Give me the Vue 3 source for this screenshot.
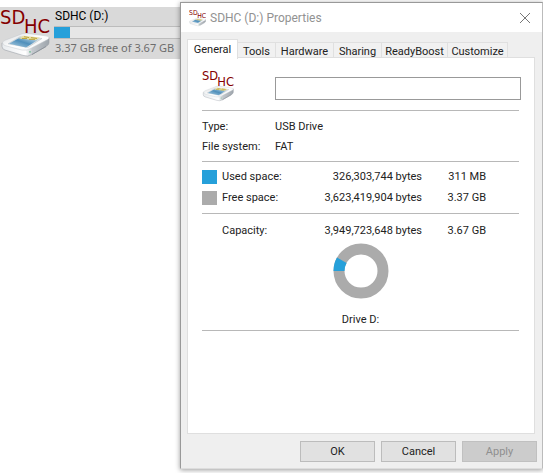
<script setup>
import { ref } from 'vue'

const tabs = ['General', 'Tools', 'Hardware', 'Sharing', 'ReadyBoost', 'Customize']
const active = ref('General')
const label = ref('')
const usage = [
  { name: 'Used space:', bytes: '326,303,744 bytes', size: '311 MB', kind: 'used' },
  { name: 'Free space:', bytes: '3,623,419,904 bytes', size: '3.37 GB', kind: 'free' },
]
</script>

<template>
  <svg class="defs" width="0" height="0" aria-hidden="true">
    <defs>
      <linearGradient id="case-top" x1="0" y1="0" x2="1" y2="1">
        <stop offset="0" stop-color="#d9dcdf" />
        <stop offset="0.5" stop-color="#ffffff" />
        <stop offset="1" stop-color="#eef1f3" />
      </linearGradient>
      <linearGradient id="case-front" x1="0" y1="0" x2="1" y2="0">
        <stop offset="0" stop-color="#e9ecef" />
        <stop offset="0.5" stop-color="#ffffff" />
        <stop offset="0.65" stop-color="#c3c8cd" />
        <stop offset="1" stop-color="#9ea5ac" />
      </linearGradient>
      <linearGradient id="card" x1="1" y1="0" x2="0" y2="1">
        <stop offset="0" stop-color="#cfe2ee" />
        <stop offset="0.5" stop-color="#4f8fbb" />
        <stop offset="1" stop-color="#b5d3e4" />
      </linearGradient>
      <symbol id="sdhc" viewBox="0 0 50 52">
        <g transform="translate(0 3) scale(1 0.89)">
          <path d="M2 37 L26 44 L49 31 V37 Q49 39 46 41 L32 50 Q28 53 23 51 L5 45 Q2 44 2 41Z" fill="url(#case-front)" stroke="#989ea4" stroke-width="0.6" />
          <path d="M3 38 Q1 36 5 34 L19 28 Q22 26 26 26 L45 29 Q51 30 48 33 L31 43 Q27 46 22 45 L5 40 Q3 39 3 38Z" fill="url(#case-top)" stroke="#c3c8cc" stroke-width="0.5" />
          <path d="M20 30 L42 32 L28 42 L8 38Z" fill="#e3e7ea" stroke="#b4babf" stroke-width="0.5" />
          <path d="M20 31 L39 33 L26 42 L9 38Z" fill="url(#card)" />
          <path d="M23 29 L40 31 L36 34 L19 32Z" fill="#e8dfa4" />
          <path d="M24 30 L29 31 M31 31 L37 32 M22 32 L27 32 M29 33 L35 33" stroke="#b9a336" stroke-width="1" />
          <path d="M32 50 L46 41" stroke="#8b9299" stroke-width="1" fill="none" />
          <circle cx="30" cy="47" r="1" fill="#7bbf9a" />
        </g>
        <text x="0" y="17" class="glyph">SD</text>
        <text x="24" y="26" class="glyph">HC</text>
      </symbol>
    </defs>
  </svg>

  <main class="desktop">
    <section class="tile">
      <svg class="tile-icon" aria-hidden="true"><use href="#sdhc" /></svg>
      <div class="tile-info">
        <span class="tile-name">SDHC (D:)</span>
        <div class="bar"><div class="fill"></div></div>
        <span class="tile-free">3.37 GB free of 3.67 GB</span>
      </div>
    </section>

    <section class="dialog" role="dialog" aria-labelledby="dialog-title">
      <header class="titlebar">
        <svg class="title-icon" aria-hidden="true"><use href="#sdhc" /></svg>
        <h1 id="dialog-title">SDHC (D:) Properties</h1>
        <button class="close" aria-label="Close">
          <svg width="12" height="12" viewBox="0 0 12 12"><path d="M1 1 L11 11 M11 1 L1 11" stroke="#777" fill="none" /></svg>
        </button>
      </header>

      <div class="body">
        <nav class="tabs" role="tablist">
          <button v-for="t in tabs" :key="t" role="tab" :aria-selected="active === t" :class="['tab', { active: active === t }]" @click="active = t">{{ t }}</button>
        </nav>

        <div class="panel" role="tabpanel">
          <div class="head">
            <svg class="head-icon" aria-hidden="true"><use href="#sdhc" /></svg>
            <input v-model="label" type="text" class="field" aria-label="Volume label" />
          </div>
          <hr />
          <dl class="facts">
            <dt>Type:</dt><dd>USB Drive</dd>
            <dt>File system:</dt><dd>FAT</dd>
          </dl>
          <hr />
          <table class="usage">
            <tbody>
              <tr v-for="u in usage" :key="u.kind">
                <td class="key"><span :class="['swatch', u.kind]"></span></td>
                <th scope="row">{{ u.name }}</th>
                <td class="bytes">{{ u.bytes }}</td>
                <td class="size">{{ u.size }}</td>
              </tr>
            </tbody>
          </table>
          <hr />
          <table class="usage capacity">
            <tbody>
              <tr>
                <td class="key"></td>
                <th scope="row">Capacity:</th>
                <td class="bytes">3,949,723,648 bytes</td>
                <td class="size">3.67 GB</td>
              </tr>
            </tbody>
          </table>
          <figure class="chart">
            <svg width="56" height="56" viewBox="0 0 56 56" aria-hidden="true">
              <circle cx="28" cy="28" r="22" fill="none" stroke="#ababab" stroke-width="11" />
              <path d="M6 28 A22 22 0 0 1 8.8 17.3" fill="none" stroke="#26a0da" stroke-width="11" />
            </svg>
            <figcaption>Drive D:</figcaption>
          </figure>
          <hr />
        </div>

        <footer class="actions">
          <button class="btn">OK</button>
          <button class="btn">Cancel</button>
          <button class="btn" disabled>Apply</button>
        </footer>
      </div>
    </section>
  </main>
</template>

<style>
body {
  background: #fff;
}
</style>

<style scoped>
* {
  box-sizing: border-box;
}
.defs {
  position: absolute;
}
.glyph {
  font: 20px "DejaVu Sans Condensed", "Roboto", sans-serif;
  fill: #850000;
}
.desktop {
  display: flex;
  align-items: flex-start;
  min-height: 100vh;
  padding: 2px 0 4px;
  font: 11px/20px Roboto, "Noto Sans", sans-serif;
  color: #222;
  overflow: hidden;
}
button,
input {
  font: inherit;
  color: inherit;
}
.tile {
  display: flex;
  gap: 4px;
  width: 180px;
  height: 52px;
  margin-top: 5px;
  background: #d9d9d9;
}
.tile-icon {
  width: 50px;
  height: 52px;
  flex: none;
}
.tile-info {
  flex: 1;
  display: flex;
  flex-direction: column;
}
.tile-name {
  padding-left: 1px;
  font-size: 12px;
  line-height: 19px;
  color: #000;
}
.bar {
  height: 13px;
  border-top: 1px solid #bcbcbc;
  border-bottom: 1px solid #bcbcbc;
  background: #e6e6e6;
}
.fill {
  width: 16px;
  height: 100%;
  background: #26a0da;
}
.tile-free {
  padding-left: 1px;
  font-family: "Noto Sans", sans-serif;
  line-height: 18px;
  color: #6d6d6d;
  white-space: nowrap;
}
.dialog {
  flex: 1;
  align-self: stretch;
  display: flex;
  flex-direction: column;
  border: 1px solid #999;
  border-bottom-color: #ddd;
  border-right-color: #bbb;
  background: #efefef;
  box-shadow: 0 1px 5px rgba(0, 0, 0, 0.4);
}
.titlebar {
  display: flex;
  align-items: center;
  gap: 4px;
  height: 29px;
  padding: 0 9px 0 8px;
  background: #fff;
}
.title-icon {
  width: 17px;
  height: 18px;
}
h1 {
  flex: 1;
  margin: 0;
  font-size: 12px;
  font-weight: 400;
  color: #929292;
}
.close {
  display: flex;
  padding: 2px;
  border: 0;
  background: none;
}
.body {
  flex: 1;
  display: flex;
  flex-direction: column;
  padding: 7px 5px 6px 6px;
}
.tabs {
  display: grid;
  grid-template-columns: 51px 38px 58px 48px 66px 60px;
  align-items: end;
  height: 18px;
}
.tab {
  height: 16px;
  padding: 0;
  border: 1px solid #e0e0e0;
  border-width: 1px 1px 0 0;
  background: #f1f1f1;
  line-height: 18px;
  overflow: hidden;
}
.tab.active {
  height: 20px;
  margin-bottom: -1px;
  border-left-width: 1px;
  background: #fff;
  position: relative;
}
.panel {
  flex: 1;
  margin-right: 2px;
  padding: 11px 15px 0 14px;
  border: 1px solid #dfdfdf;
  background: #fff;
}
hr {
  height: 1px;
  margin: 0;
  border: 0;
  background: #b8b8b8;
}
.head {
  display: flex;
  gap: 41px;
  height: 41px;
  margin-right: -2px;
}
.head-icon {
  width: 32px;
  height: 34px;
  flex: none;
}
.field {
  flex: 1;
  min-width: 0;
  height: 23px;
  margin: 8px 0 0;
  padding: 0 4px;
  border: 1px solid #999;
  background: #fff;
}
.facts {
  display: grid;
  grid-template-columns: 73px 1fr;
  margin: 0;
  padding: 6px 0 4px;
}
dd {
  margin: 0;
}
.usage {
  width: 284px;
  margin: 4px 0 5px;
  border-collapse: collapse;
  table-layout: fixed;
}
.usage td,
.usage th {
  height: 21px;
  padding: 0;
  font-weight: 400;
  text-align: left;
}
.usage .key {
  width: 20px;
}
.usage .bytes {
  width: 120px;
  text-align: right;
}
.usage .size {
  width: 64px;
  text-align: right;
}
.usage.capacity {
  margin: 6px 0 2px;
}
.swatch {
  display: block;
  width: 15px;
  height: 14px;
}
.used {
  background: #26a0da;
}
.free {
  background: #ababab;
}
.chart {
  display: flex;
  flex-direction: column;
  align-items: center;
  gap: 11px;
  margin: 0;
}
.actions {
  display: flex;
  justify-content: flex-end;
  gap: 6px;
  padding-top: 7px;
}
.btn {
  width: 75px;
  height: 21px;
  padding: 0;
  border: 1px solid #bcbcbc;
  background: #e1e1e1;
  line-height: 18px;
}
.btn:disabled {
  background: #cccccc;
  border-color: #c0c0c0;
  color: #8f8f8f;
}
</style>
